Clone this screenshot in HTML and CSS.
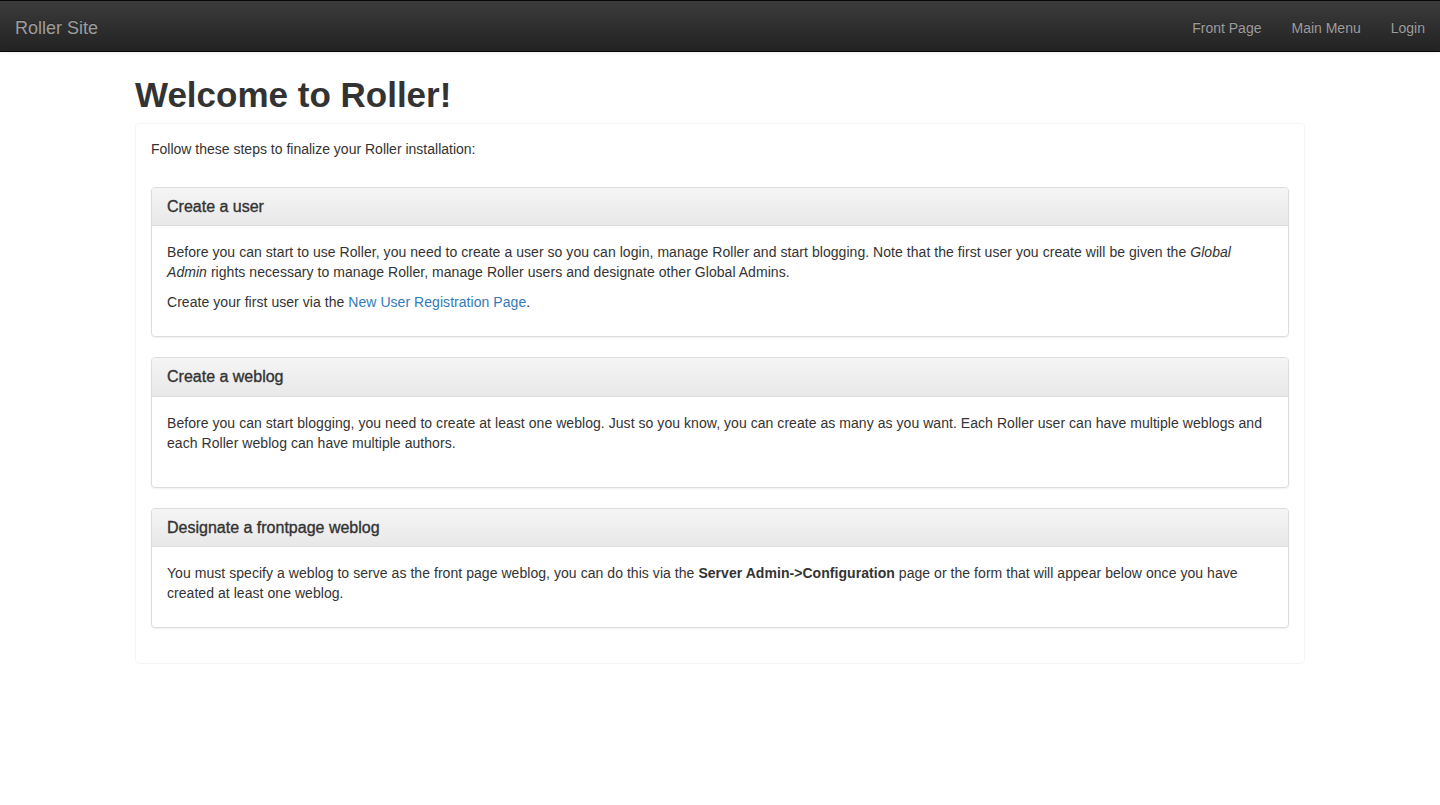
FILE: index.html
```html
<!DOCTYPE html>
<html lang="en">
<head>
<meta charset="utf-8">
<title>Welcome to Roller!</title>
<link rel="stylesheet" href="styles.css">
</head>
<body>
<nav class="navbar">
  <a class="brand" href="#">Roller Site</a>
  <ul class="nav">
    <li><a href="#">Front Page</a></li>
    <li><a href="#">Main Menu</a></li>
    <li><a href="#">Login</a></li>
  </ul>
</nav>
<main class="container">
  <h1 class="title">Welcome to Roller!</h1>
  <div class="box">
    <p class="intro">Follow these steps to finalize your Roller installation:</p>

    <section class="panel">
      <div class="panel-heading"><h3 class="panel-title">Create a user</h3></div>
      <div class="panel-body">
        <p>Before you can start to use Roller, you need to create a user so you can login, manage Roller and start blogging. Note that the first user you create will be given the <em>Global Admin</em> rights necessary to manage Roller, manage Roller users and designate other Global Admins.</p>
        <p>Create your first user via the <a class="link" href="#">New User Registration Page</a>.</p>
      </div>
    </section>

    <section class="panel">
      <div class="panel-heading"><h3 class="panel-title">Create a weblog</h3></div>
      <div class="panel-body panel-body-extra">
        <p>Before you can start blogging, you need to create at least one weblog. Just so you know, you can create as many as you want. Each Roller user can have multiple weblogs and each Roller weblog can have multiple authors.</p>
      </div>
    </section>

    <section class="panel">
      <div class="panel-heading"><h3 class="panel-title">Designate a frontpage weblog</h3></div>
      <div class="panel-body">
        <p>You must specify a weblog to serve as the front page weblog, you can do this via the <strong>Server Admin-&gt;Configuration</strong> page or the form that will appear below once you have created at least one weblog.</p>
      </div>
    </section>
  </div>
</main>
</body>
</html>
```

FILE: styles.css
```css
* { box-sizing: border-box; }

html, body {
  margin: 0;
  padding: 0;
  background: #fff;
}

body {
  font-family: "Liberation Sans", Arial, Helvetica, sans-serif;
  font-size: 14px;
  line-height: 20px;
  color: #333;
}

.navbar {
  height: 52px;
  display: flex;
  align-items: center;
  justify-content: space-between;
  background: linear-gradient(to bottom, #3c3c3c 0%, #222 100%);
  border-top: 1px solid #080808;
  border-bottom: 1px solid #080808;
  box-shadow: 0 1px 3px rgba(0, 0, 0, 0.08);
}

.brand {
  padding: 4px 15px 0;
  font-size: 18px;
  line-height: 20px;
  color: #9d9d9d;
  text-decoration: none;
  text-shadow: 0 -1px 0 rgba(0, 0, 0, 0.25);
}

.nav {
  list-style: none;
  margin: 0;
  padding: 0;
  display: flex;
}

.nav a {
  display: block;
  padding: 4px 15px 0;
  line-height: 20px;
  font-size: 14px;
  color: #9d9d9d;
  text-decoration: none;
  text-shadow: 0 -1px 0 rgba(0, 0, 0, 0.25);
}

.container {
  width: 1170px;
  margin: 0 auto;
}

.title {
  margin: 23px 0 8px;
  font-size: 35px;
  line-height: 39.6px;
  font-weight: 700;
  color: #333;
}

.box {
  border: 1px solid #f5f5f5;
  border-radius: 4px;
  padding: 15px 15px 15px;
  background: #fff;
}

.intro {
  margin: 0 0 28px;
}

.panel {
  border: 1px solid #ddd;
  border-radius: 4px;
  background: #fff;
  margin-bottom: 20px;
  box-shadow: 0 1px 2px rgba(0, 0, 0, 0.06);
}

.panel-heading {
  padding: 10px 15px;
  border-bottom: 1px solid #ddd;
  border-radius: 3px 3px 0 0;
  background: linear-gradient(to bottom, #f5f5f5 0%, #e8e8e8 100%);
}

.panel-title {
  margin: 0;
  font-size: 16px;
  line-height: 17.6px;
  font-weight: 400;
  color: #333;
  -webkit-text-stroke: 0.35px #333;
}

.panel-body {
  padding: 16px 15px 14px;
  letter-spacing: 0.05px;
}

.panel-body p {
  margin: 0 0 10px;
}

.panel-body-extra {
  padding-bottom: 24px;
}

.link {
  color: #337ab7;
  text-decoration: none;
}
```
